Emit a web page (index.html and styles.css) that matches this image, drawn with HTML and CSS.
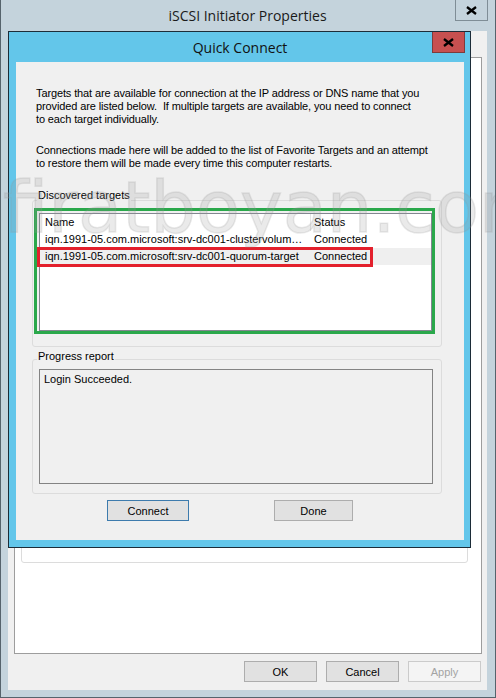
FILE: index.html
```html
<!DOCTYPE html>
<html lang="en">
<head>
    <meta charset="UTF-8">
    <meta name="viewport" content="width=device-width, initial-scale=1.0">
    <title>iSCSI Initiator Properties</title>
    <link rel="stylesheet" href="styles.css">
</head>
<body>
    <div class="window">
        <div class="win-title">iSCSI Initiator Properties</div>
        <span class="win-close">
            <svg width="11" height="9" viewBox="0 0 11 9"><path d="M1 1 L10 8 M10 1 L1 8" stroke="#000" stroke-width="2.3"/></svg>
        </span>

        <div class="win-client">
            <div class="tab-panel">
                <div class="panel-group"></div>
            </div>
            <div class="win-buttons">
                <button class="btn">OK</button>
                <button class="btn">Cancel</button>
                <button class="btn" disabled>Apply</button>
            </div>
        </div>

        <!-- Quick Connect dialog -->
        <div class="dialog">
            <div class="dlg-title">Quick Connect</div>
            <span class="dlg-close">
                <svg width="11" height="9" viewBox="0 0 11 9"><path d="M1 1 L10 8 M10 1 L1 8" stroke="#000" stroke-width="2.3"/></svg>
            </span>

            <div class="dlg-content">
                <p class="info">Targets that are available for connection at the IP address or DNS name that you<br>provided are listed below.&nbsp; If multiple targets are available, you need to connect<br>to each target individually.</p>
                <p class="info second">Connections made here will be added to the list of Favorite Targets and an attempt<br>to restore them will be made every time this computer restarts.</p>

                <div class="group targets">
                    <span class="group-label">Discovered targets</span>
                    <div class="listview">
                        <div class="lv-row lv-head">
                            <div class="col-name">Name</div>
                            <div class="col-status">Status</div>
                        </div>
                        <div class="lv-row">
                            <div class="col-name">iqn.1991-05.com.microsoft:srv-dc001-clustervolum…</div>
                            <div class="col-status">Connected</div>
                        </div>
                        <div class="lv-row selected">
                            <div class="col-name">iqn.1991-05.com.microsoft:srv-dc001-quorum-target</div>
                            <div class="col-status">Connected</div>
                        </div>
                    </div>
                </div>

                <div class="group progress">
                    <span class="group-label">Progress report</span>
                    <div class="report">Login Succeeded.</div>
                </div>

                <div class="dlg-buttons">
                    <button class="btn default">Connect</button>
                    <button class="btn">Done</button>
                </div>

                <div class="mark-green"></div>
                <div class="mark-red"></div>
            </div>
        </div>

        <div class="watermark">firatboyan.com</div>
    </div>
</body>
</html>
```

FILE: styles.css
```css
* {
    margin: 0;
    padding: 0;
    box-sizing: border-box;
}

body {
    background: #fff;
    font-family: "Liberation Sans", Arial, sans-serif;
    font-size: 11px;
    color: #000;
}

.window {
    position: relative;
    width: 496px;
    height: 698px;
    background: #c4d3dc;
    border: 1px solid #56636c;
    border-top: none;
    padding: 0 8px 7px 7px;
    display: flex;
    flex-direction: column;
    overflow: hidden;
}

.win-title {
    height: 31px;
    line-height: 32px;
    text-align: center;
    font-family: "Open Sans", sans-serif;
    font-size: 14px;
    color: #1a1a1a;
}

.win-close {
    position: absolute;
    top: 0;
    right: 7px;
    width: 33px;
    height: 21px;
    border: 1px solid #7f8d96;
    border-top: none;
    display: flex;
    align-items: center;
    justify-content: center;
}

.win-client {
    flex: 1;
    background: #f0f0f0;
    padding: 26px 5px 8px 6px;
    display: flex;
    flex-direction: column;
}

.tab-panel {
    flex: 1;
    background: #fff;
    border: 1px solid #9d9d9d;
    padding: 20px 13px 0 6px;
}

.panel-group {
    height: 485px;
    border: 1px solid #dcdcdc;
    border-radius: 3px;
}

.win-buttons {
    display: flex;
    justify-content: flex-end;
    gap: 9px;
    margin-top: 7px;
    margin-right: 1px;
}

.btn {
    width: 73px;
    height: 21px;
    background: #e1e1e1;
    border: 1px solid #adadad;
    font-family: "Liberation Sans", Arial, sans-serif;
    font-size: 11px;
    color: #000;
}

.btn:disabled {
    background: #f4f4f4;
    border-color: #cbcbcb;
    color: #a3a3a3;
}

/* dialog */

.dialog {
    position: absolute;
    left: 7px;
    top: 31px;
    width: 463px;
    height: 517px;
    background: #63c6ea;
    border: 1px solid #1c2c38;
    padding: 0 6px 7px 7px;
    display: flex;
    flex-direction: column;
}

.dlg-title {
    height: 30px;
    line-height: 31px;
    text-align: center;
    font-family: "Open Sans", sans-serif;
    font-size: 14px;
    color: #111;
}

.dlg-close {
    position: absolute;
    top: 0;
    left: 423px;
    width: 33px;
    height: 21px;
    background: #c75050;
    border: 1px solid #7e3b3b;
    border-top: none;
    display: flex;
    align-items: center;
    justify-content: center;
}

.dlg-content {
    position: relative;
    flex: 1;
    background: #f0f0f0;
    padding: 25px 22px 0 16px;
}

.info {
    margin-left: 4px;
    line-height: 13px;
    letter-spacing: -0.12px;
    white-space: nowrap;
}

.info.second {
    margin-top: 18px;
}

.group {
    position: relative;
    width: 410px;
    border: 1px solid #dcdcdc;
    border-radius: 3px;
}

.group-label {
    position: absolute;
    top: -12px;
    left: 4px;
    padding: 0 1px;
    line-height: 13px;
    background: #f0f0f0;
}

.targets {
    height: 147px;
    margin-top: 30px;
    padding: 12px 0 0 6px;
}

.listview {
    width: 393px;
    height: 118px;
    background: #fff;
    border: 1px solid #828790;
}

.lv-row {
    display: flex;
    height: 17px;
    line-height: 17px;
    white-space: nowrap;
}

.col-name {
    width: 271px;
    padding-left: 5px;
    overflow: hidden;
}

.col-status {
    padding-left: 3px;
}

.lv-head .col-name {
    border-right: 1px solid #e5e5e5;
}

.lv-row.selected {
    background: #efefef;
}

.progress {
    height: 135px;
    margin-top: 12px;
    padding: 9px 0 0 6px;
}

.progress .group-label {
    top: -10px;
}

.report {
    width: 394px;
    height: 115px;
    border: 1px solid #838383;
    padding: 3px 4px;
    line-height: 13px;
}

.dlg-buttons {
    display: flex;
    gap: 85px;
    margin: 6px 0 0 75px;
}

.dlg-buttons .btn {
    width: 79px;
}

.dlg-buttons .btn.default {
    width: 82px;
    border-color: #3d7bad;
}

/* annotation boxes drawn over the screenshot */

.mark-green {
    position: absolute;
    left: 18px;
    top: 146px;
    width: 401px;
    height: 126px;
    border: 3px solid #2aa84b;
}

.mark-red {
    position: absolute;
    left: 21px;
    top: 185px;
    width: 336px;
    height: 20px;
    border: 3px solid #e3202c;
}

.watermark {
    position: absolute;
    left: 2px;
    top: 171px;
    font-family: "DejaVu Sans", sans-serif;
    font-size: 72px;
    line-height: 72px;
    white-space: nowrap;
    color: rgba(150, 150, 150, 0.2);
    -webkit-text-stroke: 1.5px rgba(150, 150, 150, 0.2);
    pointer-events: none;
}
```
